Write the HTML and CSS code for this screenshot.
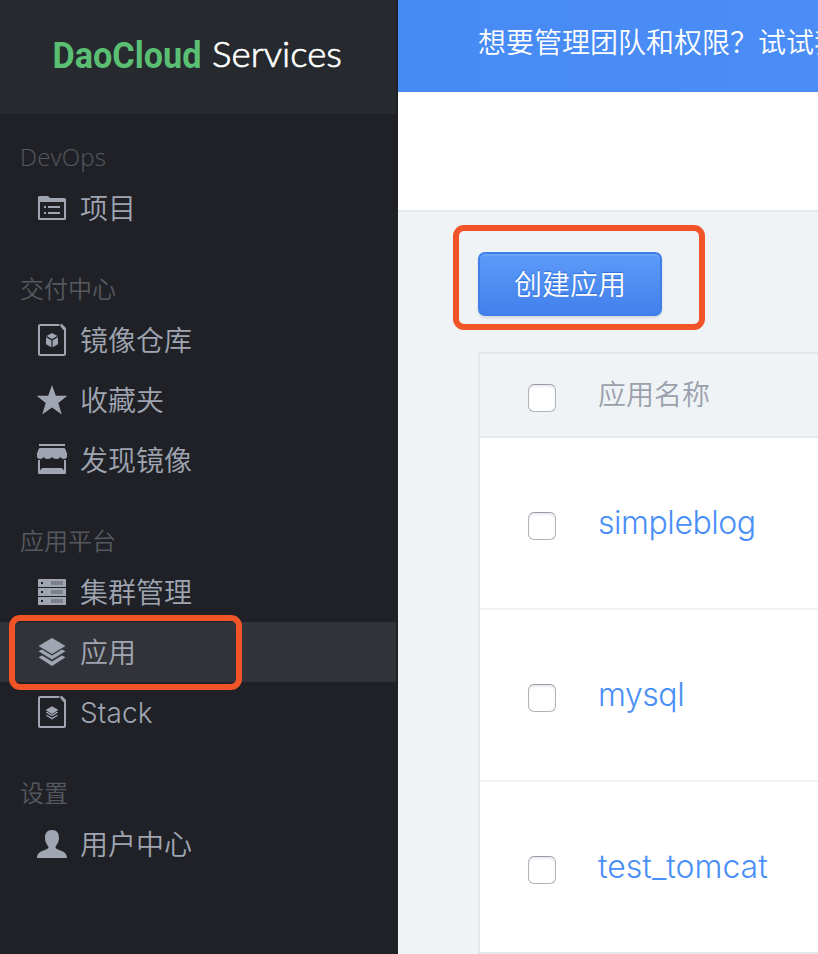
FILE: index.html
```html
<!DOCTYPE html>
<html lang="zh-CN">
<head>
<meta charset="utf-8">
<title>DaoCloud Services</title>
<link rel="stylesheet" href="styles.css">
</head>
<body>
<div class="app">
  <aside class="sidebar">
    <div class="brand">
      <svg class="logo" width="396" height="114" viewBox="0 0 396 114">
        <text class="logo-dao" x="52.500" y="68" textLength="149" lengthAdjust="spacingAndGlyphs">DaoCloud</text>
        <text class="logo-services" x="212" y="67" textLength="130" lengthAdjust="spacingAndGlyphs">Services</text>
      </svg>
    </div>
    <nav class="menu">
      <section class="group">
        <h2 class="group-title latin">DevOps</h2>
        <a class="item"><svg class="icon" viewBox="0 0 32 32"><path fill-rule="evenodd" d="M2 5.500Q2 4 3.500 4H12l2 2h14.500Q30 6 30 7.500V26.500Q30 28 28.500 28h-25Q2 28 2 26.500zM4 10v16h24V10z"/><path d="M8 14h2v2H8zm4 0h12v2H12zM8 20h2v2H8zm4 0h12v2H12z"/></svg><span>项目</span></a>
      </section>
      <section class="group">
        <h2 class="group-title">交付中心</h2>
        <a class="item"><svg class="icon" viewBox="0 0 32 32"><path class="line" d="M23.500 1H4Q3 1 3 2v28q0 1 1 1h24q1 0 1-1V6"/><path d="M24.500 0H26l4 4v2h-2.500l-3-3.500zM16 9l5.500 3-5.500 3-5.500-3zM10 13.200l5.400 3v7L10 20.200zm12 0v7l-5.400 3v-7z"/></svg><span>镜像仓库</span></a>
        <a class="item"><svg class="icon" viewBox="0 0 32 32"><path d="M16 1l3.800 10.800H31.300l-9 7.200L25.800 30.500 16 23.500 6.200 30.500 9.700 19l-9-7.200h11.500z"/></svg><span>收藏夹</span></a>
        <a class="item"><svg class="icon" viewBox="0 0 32 32"><path d="M3 0h26v2H3zM4 4h24q1 0 1.300 1L31 9.500V13q-.8 2-3 2-2.500 0-3.500-2-1.200 2-4.200 2-3 0-4.300-2-1.300 2-4.300 2-3 0-4.200-2-1 2-3.500 2-2.200 0-3-2V9.500L2.700 5Q3 4 4 4z"/><path fill-rule="evenodd" d="M2 16h2v10.500L6 24h20l2 2.500V16h2v13q0 1-1 1H3q-1 0-1-1z"/></svg><span>发现镜像</span></a>
      </section>
      <section class="group">
        <h2 class="group-title">应用平台</h2>
        <a class="item"><svg class="icon" viewBox="0 0 32 32"><rect x="2" y="3" width="28" height="8" rx=".5"/><rect x="2" y="12" width="28" height="8" rx=".5"/><rect x="2" y="21" width="28" height="8" rx=".5"/><path class="slot" d="M5 6h2v2H5zm0 9h2v2H5zm0 9h2v2H5z"/><path class="vent" d="M15 5h12v4H15zm0 9h12v4H15zm0 9h12v4H15z"/></svg><span>集群管理</span></a>
        <a class="item active"><svg class="icon" viewBox="0 0 32 32"><path d="M16 2l13.500 8L16 18 2.500 10zM2.500 15.200L6 13.500l10 6 10-6 3.500 1.700-13.500 8.300zM2.500 21.200L6 19.500l10 6 10-6 3.500 1.700L16 30z"/></svg><span>应用</span></a>
        <a class="item"><svg class="icon" viewBox="0 0 32 32"><path class="line" d="M23.500 1H4Q3 1 3 2v28q0 1 1 1h24q1 0 1-1V6"/><path d="M24.500 0H26l4 4v2h-2.500l-3-3.500z"/><path transform="translate(8.300 9.300) scale(.48)" d="M16 2l13.500 8L16 18 2.500 10zM3 15l3-1.500 10 6 10-6 3 1.500-13 8zM3 21.500L6 20l10 6 10-6 3 1.500-13 8z"/></svg><span class="stack">Stack</span></a>
      </section>
      <section class="group">
        <h2 class="group-title">设置</h2>
        <a class="item"><svg class="icon" viewBox="0 0 32 32"><path d="M16 2c5 0 7 3.500 7 7.500 0 5-2 6.500-3.500 9.500 0 4 11.500 2.500 11.500 11H1c0-8.500 11.500-7 11.500-11C11 16 9 14.500 9 9.500 9 5.500 11 2 16 2z"/></svg><span>用户中心</span></a>
      </section>
    </nav>
    <span class="callout callout-menu"></span>
  </aside>
  <main class="content">
    <div class="banner">想要管理团队和权限？试试我</div>
    <div class="topbar"></div>
    <div class="page">
      <div class="actions"><button class="create">创建应用</button><span class="callout callout-create"></span></div>
      <div class="table">
        <div class="row head"><input type="checkbox" class="check"><span>应用名称</span></div>
        <div class="row"><input type="checkbox" class="check"><a>simpleblog</a></div>
        <div class="row"><input type="checkbox" class="check"><a>mysql</a></div>
        <div class="row"><input type="checkbox" class="check"><a class="wide">test_tomcat</a></div>
      </div>
    </div>
  </main>
</div>
</body>
</html>
```
FILE: styles.css
```css
* { box-sizing: border-box; }
body { margin: 0; overflow: hidden; font-family: Inter, "Noto Sans CJK SC", sans-serif; font-weight: 350; }
.app { display: flex; width: 818px; height: 954px; overflow: hidden; }

.sidebar { position: relative; flex: 0 0 398px; background: #202126; }
.brand { width: 396px; height: 114px; background: #26292e; }
.logo { display: block; }
.logo-dao { font: 700 37px Roboto, sans-serif; fill: #5bbf73; }
.logo-services { font: 300 36px Lato, sans-serif; fill: #fff; stroke: #fff; stroke-width: .7px; }
.menu { width: 396px; }
.group { padding-top: 32px; }
.group:first-child { padding-top: 24px; }
.group-title { margin: 0; padding-left: 20px; height: 40px; line-height: 40px; font-size: 24px; font-weight: 350; color: #55595f; }
.group-title.latin { font-family: "Open Sans", sans-serif; font-weight: 350; font-size: 24px; letter-spacing: .2px; line-height: 38px; }
.item { display: flex; align-items: center; gap: 12px; height: 60px; padding-left: 36px; font-size: 28px; line-height: 40px; color: #9fa5b1; }
.item span { padding-top: 2px; }
.item.active { background: #323338; }
.icon { flex: none; width: 32px; height: 32px; fill: #9fa5b1; }
.icon .line { fill: none; stroke: #9fa5b1; stroke-width: 2; }
.icon .slot { fill: #202126; }
.icon .vent { fill: #7c818b; }
.stack { font-size: 28px; font-weight: 350; letter-spacing: .1px; }

.callout { position: absolute; border: 6px solid #f15427; border-radius: 11px; pointer-events: none; }
.callout-menu { left: 9px; top: 615px; width: 233px; height: 75px; }
.callout-create { left: -25px; top: -27px; width: 252px; height: 105px; }

.content { flex: 1; min-width: 0; display: flex; flex-direction: column; background: #eff3f6; }
.banner { height: 92px; padding-left: 80px; line-height: 86px; font-size: 28px; white-space: nowrap; overflow: hidden; color: #fff; background: linear-gradient(90deg, #468af4, #4b8df6); }
.topbar { height: 120px; background: #fff; border-bottom: 2px solid #e4e7eb; }
.page { flex: 1; padding: 40px 0 0 80px; }
.actions { position: relative; height: 100px; }
.create { display: block; width: 184px; height: 64px; padding: 0 0 2px; border: 2px solid #3d7eea; border-radius: 7px; background: linear-gradient(#5c9af9, #4381ec); box-shadow: 0 2px 3px rgba(0,0,0,.1), inset 0 2px 0 rgba(255,255,255,.1); color: #fff; font: 350 28px "Noto Sans CJK SC", sans-serif; text-shadow: 0 -1px 1px #2d6fd8; }
.table { width: 600px; border: 2px solid #e5e7ec; }
.row { display: flex; align-items: center; height: 172px; padding-left: 48px; background: #fff; border-bottom: 2px solid #eff3f6; font-size: 32px; font-weight: 350; letter-spacing: -.45px; color: #4a8ff7; }
.row a { padding-bottom: 2px; }
.row .wide { letter-spacing: 0; }
.row:last-child { border-bottom: 0; height: 170px; }
.row.head { height: 84px; background: #eff3f6; border-color: #e5e7ec; color: #9aa1ac; font-size: 28px; font-weight: 350; letter-spacing: 0; }
.row.head span { padding-bottom: 4px; }
.check { appearance: none; flex: none; width: 28px; height: 28px; margin: 6px 42px 0 0; border: 1px solid #b2b3b8; border-top-color: #999ba3; border-radius: 6px; background: #fff; box-shadow: inset 0 2px 2px #e9ebef; }
```
